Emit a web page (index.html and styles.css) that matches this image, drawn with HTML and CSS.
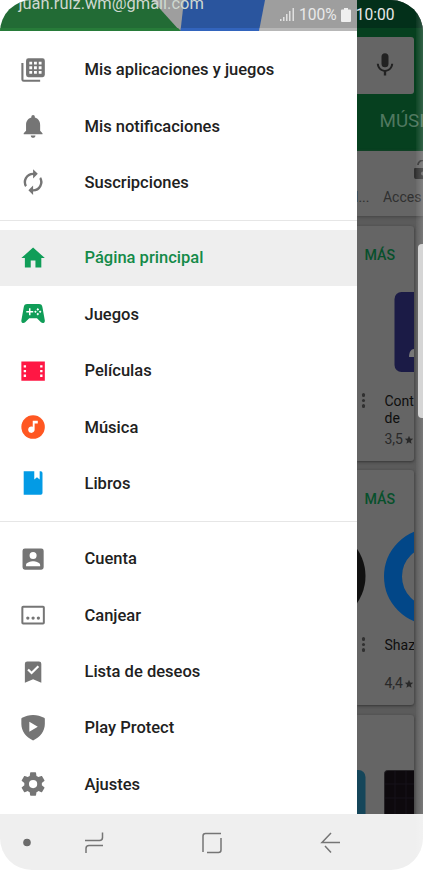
FILE: index.html
```html
<!DOCTYPE html>
<html lang="es">
<head>
<meta charset="utf-8">
<title>Play Store</title>
<link rel="stylesheet" href="styles.css">
</head>
<body>
<div class="phone">
  <div class="main">
    <aside class="drawer">
      <header class="account">
        <svg class="account-art" viewBox="0 0 357 31" preserveAspectRatio="none"><path fill="#226b35" d="M0 0h357v31H0z"/><path fill="#9e9e9e" d="M152 0h205v31H180z"/><path fill="#2a559e" d="M184 0h81l-6 31h-78.500z"/><path fill="#277b39" d="M0 28h178l3 3H0z"/><path fill="#3264bd" d="M181 28h79l-1 3h-78.500z"/><path fill="#b7b7b7" d="M259.500 28H357v3h-98z"/></svg>
        <span class="email">juan.ruiz.wm@gmail.com</span>
      </header>
      <nav>
        <ul class="group first">
          <li><svg viewBox="0 0 24 24"><path fill-rule="evenodd" d="M8 2h12a2 2 0 0 1 2 2v12a2 2 0 0 1-2 2H8a2 2 0 0 1-2-2V4a2 2 0 0 1 2-2zm.8 2.800v2.400h2.400V4.800zm4 0v2.400h2.400V4.800zm4 0v2.400h2.400V4.800zm-8 4v2.400h2.400V8.800zm4 0v2.400h2.400V8.800zm4 0v2.400h2.400V8.800zm-8 4v2.400h2.400v-2.400zm4 0v2.400h2.400v-2.400zm4 0v2.400h2.400v-2.400z"/><path d="M2 6h1.800v14.200H18V22H4a2 2 0 0 1-2-2z"/></svg><span>Mis aplicaciones y juegos</span></li>
          <li><svg viewBox="0 0 24 24"><path d="M12 22c1.100 0 2-.9 2-2h-4c0 1.100.9 2 2 2zm6-6v-5c0-3.070-1.640-5.640-4.500-6.320V4a1.500 1.500 0 0 0-3 0v.68C7.630 5.360 6 7.920 6 11v5l-2 2v1h16v-1z"/></svg><span>Mis notificaciones</span></li>
          <li><svg viewBox="0 0 24 24"><path d="M12 6v3l4-4-4-4v3a8 8 0 0 0-6.760 12.260L6.700 14.800A6 6 0 0 1 12 6zm6.760 1.740L17.300 9.200A6 6 0 0 1 12 18v-3l-4 4 4 4v-3a8 8 0 0 0 6.760-12.260z"/></svg><span>Suscripciones</span></li>
        </ul>
        <ul class="group">
          <li class="active"><svg class="green" viewBox="0 0 24 24"><path d="M10 20v-6h4v6h5v-8h3L12 3 2 12h3v8z"/></svg><span>Página principal</span></li>
          <li><svg class="green" viewBox="0 0 24 24"><path d="M7 3.500h10c1.800 0 2.800 1 3 2.800l2 11.200c.3 2.200-2 2.800-3.300 1.500L15.300 15.500H8.700L5.300 19C4 20.300 1.700 19.700 2 17.500L4 6.300c.2-1.800 1.200-2.800 3-2.800z"/><path fill="#fff" d="M8.500 7h1.300v2.300h2.300v1.300H9.800v2.300H8.500v-2.300H6.200V9.300h2.300zM16 6.900l1.100 1.100L16 9.100 14.900 8zm-2 2 1.100 1.100-1.100 1.100-1.100-1.100zm4 0 1.100 1.100-1.100 1.100-1.100-1.100zm-2 2 1.100 1.100-1.100 1.100-1.100-1.100z"/></svg><span>Juegos</span></li>
          <li><svg class="red" viewBox="0 0 24 24"><path fill-rule="evenodd" d="M2 3.800h20v16.400H2zm2 3.200v2h2V7zm0 4v2h2v-2zm0 4v2h2v-2zm14-8v2h2V7zm0 4v2h2v-2zm0 4v2h2v-2z"/></svg><span>Películas</span></li>
          <li><svg class="orange" viewBox="0 0 24 24"><circle cx="12" cy="12" r="10"/><path fill="#fff" d="M11.700 6.500H16v2.400h-2.700v5.300a2.750 2.750 0 1 1-1.600-2.500z"/></svg><span>Música</span></li>
          <li><svg class="blue" viewBox="0 0 24 24"><path d="M4 2h9v7l2.300-2 2.300 2V2h.9A1.500 1.500 0 0 1 20 3.500v17a1.500 1.500 0 0 1-1.500 1.500H4z"/></svg><span>Libros</span></li>
        </ul>
        <ul class="group last">
          <li><svg viewBox="0 0 24 24"><path d="M3 5v14a2 2 0 0 0 2 2h14a2 2 0 0 0 2-2V5a2 2 0 0 0-2-2H5a2 2 0 0 0-2 2zm12 4a3 3 0 1 1-6 0 3 3 0 0 1 6 0zm-9 8c0-2 4-3.100 6-3.100s6 1.100 6 3.100v1H6z"/></svg><span>Cuenta</span></li>
          <li><svg viewBox="0 0 24 24"><path fill-rule="evenodd" d="M3.500 4h17A1.500 1.500 0 0 1 22 5.500v13a1.500 1.500 0 0 1-1.500 1.500h-17A1.500 1.500 0 0 1 2 18.500v-13A1.500 1.500 0 0 1 3.500 4zm.2 1.700v12.600h16.600V5.700z"/><circle cx="7.500" cy="14.500" r="1.400"/><circle cx="12" cy="14.500" r="1.400"/><circle cx="16.500" cy="14.500" r="1.400"/></svg><span>Canjear</span></li>
          <li><svg viewBox="0 0 24 24"><path d="M7 3h10a2 2 0 0 1 2 2v16l-7-3-7 3V5a2 2 0 0 1 2-2z"/><path fill="none" stroke="#fff" stroke-width="1.900" d="m7.700 9.800 3 3 5.800-5.800"/></svg><span>Lista de deseos</span></li>
          <li><svg viewBox="0 0 24 24"><path fill-rule="evenodd" d="M12 .8c3.500 0 6.500.9 9.400 2.400.4.200.6.500.6.900v4.500c0 6-4 11.300-10 13.900C6 19.900 2 14.600 2 8.600V4.100c0-.4.200-.7.600-.9C5.500 1.700 8.500.8 12 .8zM8.800 6.500v8.700l7.200-4.350z"/></svg><span>Play Protect</span></li>
          <li><svg viewBox="0 0 24 24"><path d="M19.430 12.980c.04-.32.070-.64.070-.98s-.03-.66-.07-.98l2.110-1.650c.19-.15.240-.42.120-.64l-2-3.460c-.12-.22-.39-.3-.61-.22l-2.490 1c-.52-.4-1.080-.73-1.690-.98l-.38-2.650C14.460 2.180 14.250 2 14 2h-4c-.25 0-.46.180-.49.420l-.38 2.650c-.61.250-1.170.590-1.690.98l-2.490-1c-.23-.09-.49 0-.61.220l-2 3.460c-.13.220-.07.490.12.640l2.110 1.650c-.04.320-.07.650-.07.980s.03.660.070.980l-2.110 1.650c-.19.150-.24.420-.12.640l2 3.460c.12.220.39.300.61.220l2.490-1c.52.400 1.080.730 1.690.980l.38 2.650c.03.240.240.420.490.420h4c.25 0 .46-.18.490-.42l.38-2.650c.61-.25 1.170-.59 1.690-.98l2.490 1c.23.090.49 0 .61-.22l2-3.460c.12-.22.070-.49-.12-.64zM12 15.500a3.500 3.500 0 1 1 0-7 3.500 3.500 0 0 1 0 7z"/></svg><span>Ajustes</span></li>
        </ul>
      </nav>
    </aside>
    <section class="store">
      <div class="topbar">
        <div class="search"><svg viewBox="0 0 24 24"><path d="M12 14a3 3 0 0 0 3-3V5a3 3 0 0 0-6 0v6a3 3 0 0 0 3 3zm5.300-3a5.300 5.300 0 0 1-10.600 0H5c0 3.410 2.720 6.230 6 6.720V21h2v-3.280c3.280-.48 6-3.300 6-6.720z"/></svg></div>
        <div class="tab">MÚSI</div>
      </div>
      <div class="shortcuts">
        <svg viewBox="0 0 20 20"><path d="M1 8h19v11H2a2 2 0 0 1-2-2V9a1 1 0 0 1 1-1z"/><path fill="none" stroke="#303030" stroke-width="1.700" d="M4 5a4.500 4.500 0 0 1 9 0v3"/><circle cx="9" cy="13.500" r="2" fill="#656565"/></svg>
        <div class="labels"><span>l...</span><span>Acces</span></div>
      </div>
      <article class="card">
        <div class="more">MÁS</div>
        <svg class="art art-contacts" viewBox="0 0 57 80"><rect x="37.500" width="50" height="80" rx="7" fill="#1b1b46"/><path fill="#777" d="M52 65c0-5 2-8 5-8v8z"/></svg>
        <div class="app"><span class="dots"><i></i><i></i><i></i></span><p>Cont<br>de</p></div>
        <div class="rating">3,5<svg viewBox="0 0 24 24"><path d="m12 17.300 6.200 3.700-1.600-7L22 9.200l-7.200-.6L12 2 9.200 8.600 2 9.200 7.400 14l-1.600 7z"/></svg></div>
      </article>
      <article class="card">
        <div class="more">MÁS</div>
        <svg class="art art-shazam" viewBox="0 0 57 96"><circle cx="-39.500" cy="48" r="48" fill="#111"/><circle cx="75" cy="48.500" r="39" fill="none" stroke="#024788" stroke-width="18"/></svg>
        <div class="app"><span class="dots"><i></i><i></i><i></i></span><p>Shaz</p></div>
        <div class="rating">4,4<svg viewBox="0 0 24 24"><path d="m12 17.300 6.200 3.700-1.600-7L22 9.200l-7.200-.6L12 2 9.200 8.600 2 9.200 7.400 14l-1.600 7z"/></svg></div>
      </article>
      <article class="card partial">
        <svg class="art" viewBox="0 0 57 44"><rect x="-20" width="28.500" height="60" rx="7" fill="#15465a"/><rect x="27.500" y=".5" width="50" height="60" rx="3" fill="#0d090d" stroke="#252326"/><path stroke="#17121a" d="M28 14h29M28 28h29M38 1v43M49 1v43"/></svg>
      </article>
    </section>
  </div>
  <footer class="navbar">
    <svg viewBox="0 0 423 56"><circle cx="27" cy="28.500" r="3.800" fill="#6c6c6c"/><path d="M85 26.500h14.500q3 0 3-3v-5M86 39v-4.500q0-3 3-3h14M203 38V22q0-2.500 2.500-2.500H221M221 24v12q0 2.500-2.500 2.500H207M340 28.500h-18l9-9.500M325 32l6 6.500"/></svg>
  </footer>
  <div class="status">
    <svg viewBox="0 0 15 13"><path d="M0 11h1.500v2H0zM3 9h1.500v4H3zM6 6h1.500v7H6zM9 3h1.500v10H9zM12.500 0H14v13h-1.500z"/></svg>
    <span class="percent">100%</span>
    <svg class="battery" viewBox="0 0 10 14"><path d="M3 0h4v1.500h2a1 1 0 0 1 1 1V13a1 1 0 0 1-1 1H1a1 1 0 0 1-1-1V2.500a1 1 0 0 1 1-1h2z"/></svg>
    <span>10:00</span>
  </div>
  <div class="edge"></div>
  <div class="handle"></div>
</div>
</body>
</html>
```

FILE: styles.css
```css
* { box-sizing: border-box; }
body { margin: 0; background: #fff; font-family: Roboto, "Liberation Sans", sans-serif; }
ul, p { margin: 0; padding: 0; list-style: none; }
svg { display: block; fill: #757575; }

.phone { position: relative; width: 423px; height: 870px; border-radius: 32px; overflow: hidden; }
.main { display: flex; height: 814px; overflow: hidden; }

.drawer { width: 357px; flex: none; background: #fff; color: #212121; }
.account { position: relative; height: 31px; overflow: hidden; }
.account-art { width: 357px; height: 31px; }
.email { position: absolute; left: 18.500px; top: -6.500px; font-size: 16.450px; line-height: 20px; color: #cfd8d0; white-space: nowrap; }

.group { padding: 9px 0 9px; border-bottom: 1.500px solid #e6e6e6; }
.group.first { padding: 10.500px 0 9px; }
.group.last { padding-top: 9px; border: 0; }
.group li { display: flex; align-items: center; height: 56.400px; padding-left: 18.800px; font-size: 16.530px; font-weight: 500; }
.group li svg { width: 28.200px; height: 28.200px; margin-right: 37.500px; }
.group li.active { background: #eee; color: #148a48; }
.group svg.green { fill: #109d58; }
.group svg.red { fill: #ff1744; }
.group svg.orange { fill: #ff5722; }
.group svg.blue { fill: #039be5; }

.store { width: 66px; flex: none; background: #5b5b5b; overflow: hidden; }
.topbar { height: 151px; padding-top: 37px; background: linear-gradient(#03301a 28px, #06401f 28px); }
.search { width: 57px; height: 57px; padding: 14px 0 0 14px; background: #656565; border-radius: 0 3px 3px 0; }
.search svg { width: 28px; height: 28px; fill: #222; }
.tab { padding: 16px 0 0 22.500px; font-size: 18.800px; line-height: 22px; color: #507860; white-space: nowrap; }
.shortcuts { height: 65px; padding-top: 9px; background: #656565; box-shadow: 0 1px 3px #444; color: #303030; }
.shortcuts svg { width: 20px; height: 20px; margin-left: 57px; fill: #303030; }
.labels { display: flex; gap: 13.500px; margin-left: -2px; padding-top: 8px; font-size: 14px; line-height: 18px; white-space: nowrap; }

.card { width: 57px; height: 235px; margin-top: 10px; padding-top: 18.500px; background: #656565; border-radius: 0 3px 3px 0; box-shadow: 0 1px 3px #333; overflow: hidden; }
.card + .card { margin-top: 9px; }
.card.partial { height: 110px; margin-top: 10px; padding-top: 55px; }
.more { padding-left: 7.500px; font-size: 14.200px; line-height: 20px; font-weight: 500; color: #07502b; }
.art { width: 57px; }
.art-contacts { height: 80px; margin-top: 27px; }
.art-shazam { height: 96px; margin-top: 19px; }
.app { display: flex; height: 38px; margin-top: 21.500px; font-size: 14px; line-height: 17px; color: #0e0e0e; }
.art-shazam + .app { height: 38px; margin-top: 13.500px; }
.dots { display: flex; flex-direction: column; gap: 2px; width: 27.500px; flex: none; padding-left: 4.500px; }
.dots i { width: 3.500px; height: 3.500px; border-radius: 50%; background: #303030; }
.rating { display: flex; align-items: center; gap: 1px; padding-left: 27.500px; font-size: 14px; line-height: 17px; color: #292929; }
.rating svg { width: 10px; height: 10px; flex: none; fill: #292929; }

.navbar { height: 56px; background: #efefef; }
.navbar svg { width: 423px; height: 56px; }
.navbar path { fill: none; stroke: #757575; stroke-width: 1.500; }

.status { position: absolute; left: 280px; top: 7px; display: flex; align-items: center; height: 15px; font-size: 15.600px; color: #e9e9e9; }
.status svg { width: 15px; height: 13px; margin-right: 4px; fill: #e0e0e0; }
.status .battery { width: 10px; height: 14px; margin: 0 5px 0 4px; fill: #efefef; }
.edge { position: absolute; right: 0; top: 0; width: 7px; height: 870px; background: linear-gradient(90deg, rgba(255,255,255,.03), rgba(255,255,255,.18)); }
.handle { position: absolute; left: 418px; top: 244px; width: 8px; height: 174px; border-radius: 5px; background: #d5d5d5; }
```
